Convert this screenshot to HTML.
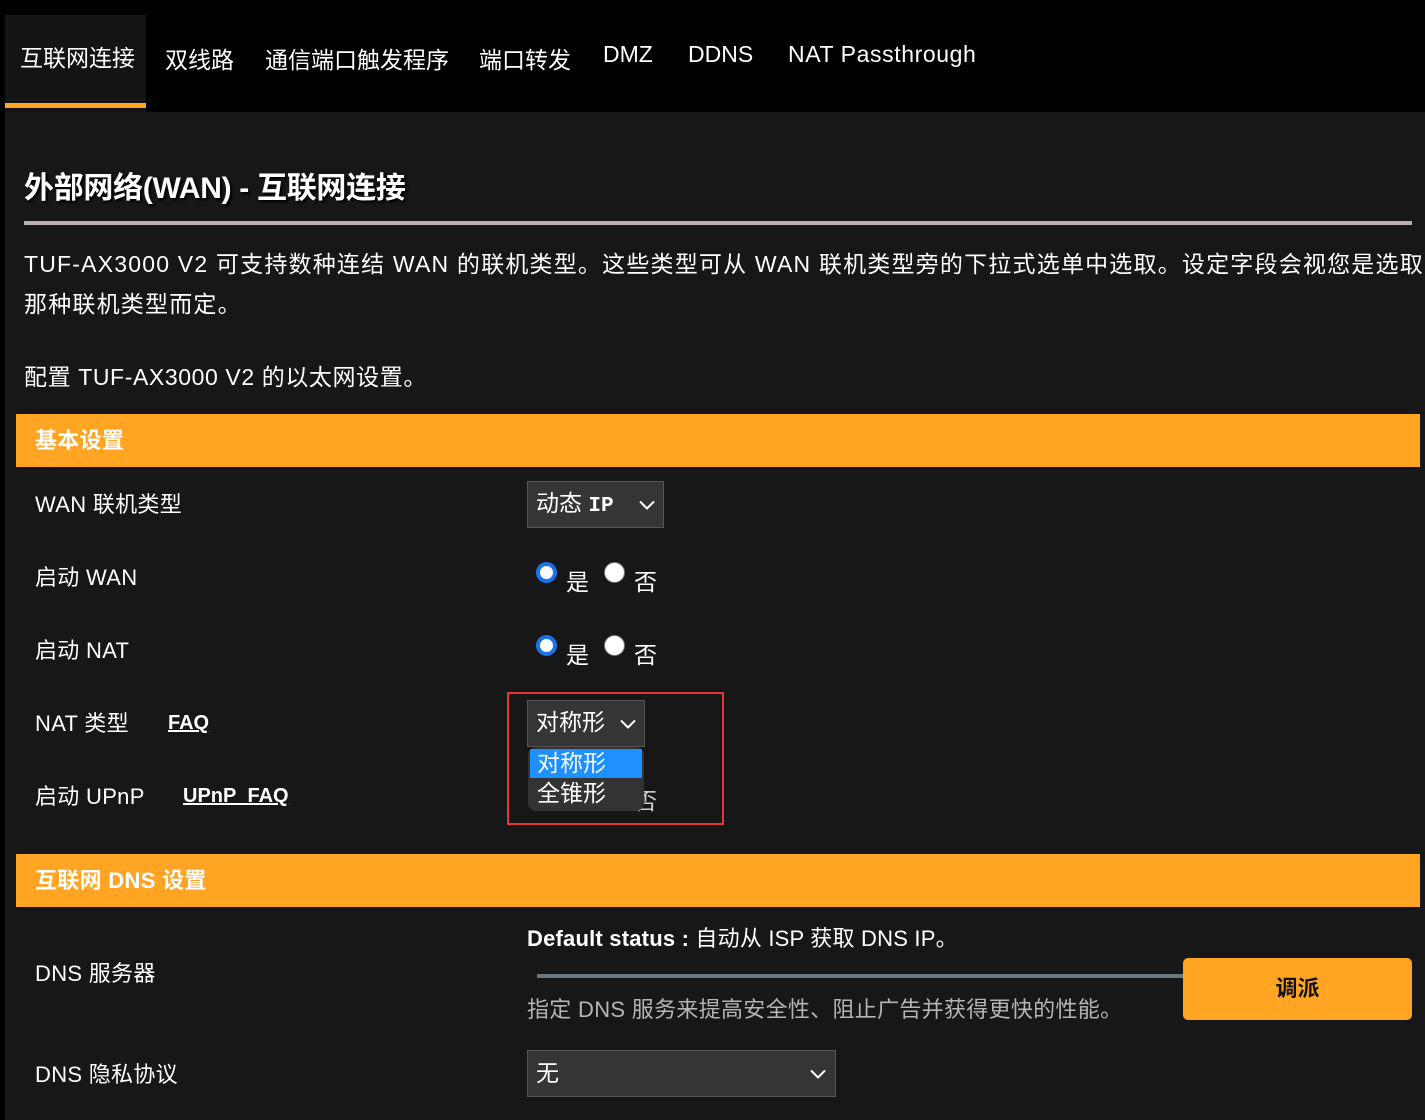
<!DOCTYPE html>
<html><head><meta charset="utf-8"><style>
body{margin:0;width:1425px;height:1120px;background:#000;font-family:"Liberation Sans","Noto Sans CJK SC",sans-serif;color:#fff;position:relative;overflow:hidden}
.a{position:absolute;white-space:nowrap}
.main{position:absolute;left:5px;top:112px;width:1420px;height:1008px;background:#171717}
.tab{font-size:23px;top:41px}
.bar{position:absolute;left:16px;width:1404px;height:53px;background:#ffa523;color:#fff;font-weight:bold;font-size:22px;line-height:53px;padding-left:19px;box-sizing:border-box;letter-spacing:0.3px}
.lbl{font-size:22px;left:35px;letter-spacing:0.3px}
.sel{position:absolute;background:#353535;border:1px solid #555;font-size:23px;box-sizing:border-box}
.r{position:absolute;width:21px;height:21px;border-radius:50%;box-sizing:border-box}
.on{border:4px solid #1a73e8;background:#fff}
.off{background:#fff;border:1px solid #777}
.chev{position:absolute;width:16px;height:10px}
</style></head><body>
<div class="main"></div>
<div class="a" style="left:5px;top:15px;width:141px;height:97px;background:#141414"></div>
<div class="a" style="left:5px;top:103px;width:141px;height:5px;background:#ffa523"></div>
<div class="a tab" style="left:20px;top:39px">互联网连接</div>
<div class="a tab" style="left:165px">双线路</div>
<div class="a tab" style="left:265px">通信端口触发程序</div>
<div class="a tab" style="left:479px">端口转发</div>
<div class="a tab" style="left:603px">DMZ</div>
<div class="a tab" style="left:688px">DDNS</div>
<div class="a tab" style="left:788px;letter-spacing:0.6px">NAT Passthrough</div>
<div class="a" style="left:24px;top:163px;font-size:30px;font-weight:bold;text-shadow:2px 2px 2px #000;letter-spacing:-0.3px">外部网络(WAN) - 互联网连接</div>
<div class="a" style="left:24px;top:221px;width:1388px;height:4px;background:#b8b0b0"></div>
<div class="a" style="left:24px;top:244px;font-size:23px;line-height:40px;letter-spacing:1.2px">TUF-AX3000 V2 可支持数种连结 WAN 的联机类型。这些类型可从 WAN 联机类型旁的下拉式选单中选取。设定字段会视您是选取<br>那种联机类型而定。</div>
<div class="a" style="left:24px;top:358px;font-size:23px;letter-spacing:0.6px">配置 TUF-AX3000 V2 的以太网设置。</div>
<div class="bar" style="top:414px">基本设置</div>
<div class="a lbl" style="top:487px">WAN 联机类型</div>
<div class="sel" style="left:527px;top:481px;width:137px;height:47px;line-height:42px;padding-left:8px">动态 <span style="font-family:'Liberation Mono';font-weight:bold;font-size:21px">IP</span></div>
<svg class="chev" style="left:639px;top:500px" viewBox="0 0 16 10"><path d="M1 1.5L8 8.5L15 1.5" stroke="#fff" stroke-width="2" fill="none"/></svg>
<div class="a lbl" style="top:560px">启动 WAN</div>
<div class="r on" style="left:536px;top:562px"></div><div class="a" style="left:566px;top:563px;font-size:23px">是</div>
<div class="r off" style="left:604px;top:562px"></div><div class="a" style="left:634px;top:563px;font-size:23px">否</div>
<div class="a lbl" style="top:633px">启动 NAT</div>
<div class="r on" style="left:536px;top:635px"></div><div class="a" style="left:566px;top:636px;font-size:23px">是</div>
<div class="r off" style="left:604px;top:635px"></div><div class="a" style="left:634px;top:636px;font-size:23px">否</div>
<div class="a lbl" style="top:706px">NAT 类型</div>
<div class="a" style="left:168px;top:712px;font-size:20px;font-weight:bold;text-decoration:underline">FAQ</div>
<div class="a lbl" style="top:779px">启动 UPnP</div>
<div class="a" style="left:183px;top:785px;font-size:20px;font-weight:bold;text-decoration:underline">UPnP&nbsp; FAQ</div>
<div class="a" style="left:634px;top:782px;font-size:23px;color:#ccc">否</div>
<div class="a" style="left:507px;top:692px;width:213px;height:129px;border:2px solid #e53535"></div>
<div class="sel" style="left:527px;top:700px;width:118px;height:47px;line-height:42px;padding-left:8px">对称形</div>
<svg class="chev" style="left:620px;top:719px" viewBox="0 0 16 10"><path d="M1 1.5L8 8.5L15 1.5" stroke="#fff" stroke-width="2" fill="none"/></svg>
<div class="a" style="left:528px;top:747px;width:116px;height:64px;background:#333;border-radius:8px;overflow:hidden;font-size:23px">
<div style="margin:2px 2px 0;background:#1e90ff;height:29px;line-height:29px;padding-left:7px">对称形</div>
<div style="height:31px;line-height:31px;padding-left:9px">全锥形</div></div>
<div class="bar" style="top:854px">互联网 DNS 设置</div>
<div class="a" style="left:527px;top:921px;font-size:22px;letter-spacing:0.2px"><b>Default status :</b> 自动从 ISP 获取 DNS IP。</div>
<div class="a lbl" style="top:956px">DNS 服务器</div>
<div class="a" style="left:537px;top:974px;width:650px;height:4px;background:#6a7680"></div>
<div class="a" style="left:527px;top:992px;font-size:22px;color:#b5b5b5;letter-spacing:0.3px">指定 DNS 服务来提高安全性、阻止广告并获得更快的性能。</div>
<div class="a" style="left:1183px;top:958px;width:229px;height:62px;background:#ffa523;border-radius:5px;color:#111;font-weight:bold;font-size:22px;text-align:center;line-height:62px">调派</div>
<div class="a lbl" style="top:1057px">DNS 隐私协议</div>
<div class="sel" style="left:527px;top:1050px;width:309px;height:47px;line-height:44px;padding-left:8px">无</div>
<svg class="chev" style="left:810px;top:1069px" viewBox="0 0 16 10"><path d="M1 1.5L8 8.5L15 1.5" stroke="#fff" stroke-width="2" fill="none"/></svg>
</body></html>
